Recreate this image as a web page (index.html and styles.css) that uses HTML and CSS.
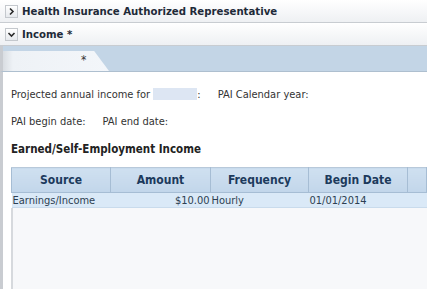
FILE: index.html
```html
<!DOCTYPE html>
<html lang="en">

<head>
  <meta charset="UTF-8">
  <title>Income</title>
  <link rel="stylesheet" href="styles.css">
</head>

<body>
  <div class="hdr">
    <span class="tog">
      <svg width="11" height="11" viewBox="0 0 11 11"><path d="M4 2.5 L7 5.5 L4 8.5" fill="none" stroke="#2a2a2a" stroke-width="1.6"/></svg>
    </span>
    Health Insurance Authorized Representative
  </div>
  <div class="hdr">
    <span class="tog">
      <svg width="11" height="11" viewBox="0 0 11 11"><path d="M2.5 4 L5.5 7 L8.5 4" fill="none" stroke="#2a2a2a" stroke-width="1.6"/></svg>
    </span>
    Income *
  </div>

  <div class="tabbar">
    <div class="tab"><span class="star">*</span></div>
  </div>

  <div class="content">
    <div class="row">
      <span>Projected annual income for <span class="mask"></span>:</span>
      <span>PAI Calendar year:</span>
    </div>
    <div class="row">
      <span>PAI begin date:</span>
      <span>PAI end date:</span>
    </div>
    <h3>Earned/Self-Employment Income</h3>

    <table class="grid">
      <tr>
        <th class="c1">Source</th>
        <th class="c2">Amount</th>
        <th class="c3">Frequency</th>
        <th class="c4">Begin Date</th>
        <th></th>
      </tr>
      <tr class="sel">
        <td>Earnings/Income</td>
        <td class="num">$10.00</td>
        <td>Hourly</td>
        <td>01/01/2014</td>
        <td></td>
      </tr>
    </table>
    <div class="filler"></div>
  </div>
</body>

</html>
```

FILE: styles.css
```css
body {
  margin: 0;
  font-family: "DejaVu Sans Condensed", "Liberation Sans", sans-serif;
  color: #333;
  background: #fff;
  overflow: hidden;
}

.hdr {
  display: flex;
  align-items: center;
  gap: 4px;
  height: 22px;
  padding-left: 5px;
  border-bottom: 1px solid #c8ccd1;
  background: linear-gradient(#ffffff, #eef0f3);
  font-size: 11.3px;
  font-weight: bold;
  color: #1e2a38;
}

.tog {
  display: flex;
  width: 11px;
  height: 11px;
  border: 1px solid #c4c8cd;
  background: linear-gradient(#ffffff, #e6e9ed);
}

.tabbar {
  height: 25px;
  background: #c3d5e6;
  border-bottom: 1px solid #aebfcf;
  border-left: 3px solid #c9ccd1;
  display: flex;
  align-items: flex-end;
}

.tab {
  width: 106px;
  height: 20px;
  background: linear-gradient(90deg, #d9dde2, #eef2f6 10px, #f3f6fa);
  clip-path: polygon(0 0, 86% 0, 100% 100%, 0 100%);
  position: relative;
}

.star {
  position: absolute;
  left: 78px;
  top: 2px;
  font-size: 12px;
  color: #333;
}

.content {
  border-left: 3px solid #c9ccd1;
  padding: 16px 0 0 8px;
  font-size: 11px;
}

.row {
  display: flex;
  gap: 17px;
  height: 13px;
  margin-bottom: 14px;
  line-height: 13px;
}

.mask {
  display: inline-block;
  width: 44px;
  height: 12px;
  vertical-align: -2px;
  background: #dde6f3;
}

h3 {
  margin: 0 0 11px;
  font-size: 11.5px;
  line-height: 14px;
  color: #222;
}

.grid {
  border-collapse: collapse;
  width: 100%;
  table-layout: fixed;
}

.grid th {
  height: 24px;
  padding: 0;
  background: linear-gradient(#cfe0f0, #c2d6ea);
  border: 1px solid #a6bdd4;
  border-top-color: #b8c9da;
  color: #1c3a5c;
  font-size: 12px;
  font-weight: bold;
  text-align: center;
}

.c1 {
  width: 98px;
}

.c2 {
  width: 99px;
}

.c3 {
  width: 97px;
}

.c4 {
  width: 98px;
}

.grid td {
  height: 14px;
  padding: 0 1px;
  background: #dae9f7;
  border-bottom: 1px solid #c9dbec;
  font-size: 11px;
  color: #2d3f52;
}

.grid td.num {
  text-align: right;
}

.filler {
  height: 90px;
  background: #f7f8fa;
  border-left: 2px solid #d6d9dd;
}
```
